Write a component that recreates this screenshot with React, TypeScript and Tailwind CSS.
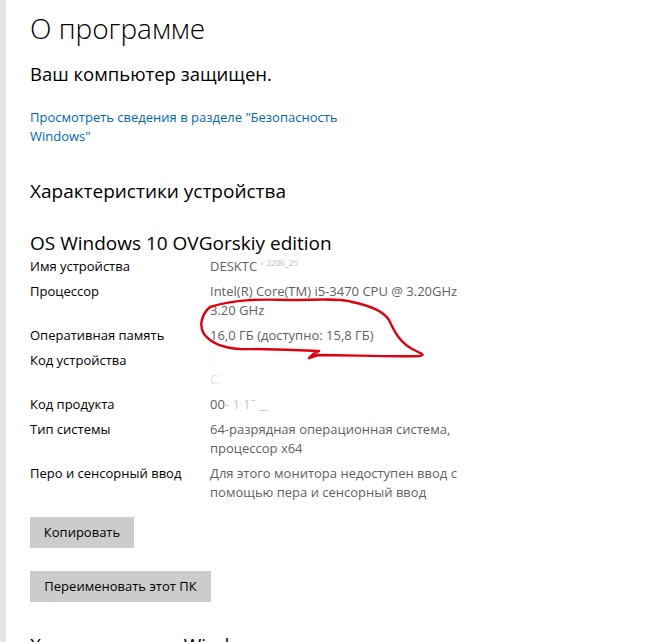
const specs = [
  { label: "Имя устройства", value: ["DESKTC"], faint: " '  ²²⁰⁶‑²⁵" },
  { label: "Процессор", value: ["Intel(R) Core(TM) i5-3470 CPU @ 3.20GHz", "3.20 GHz"] },
  { label: "Оперативная память", value: ["16,0 ГБ (доступно: 15,8 ГБ)"] },
  { label: "Код устройства", value: ["", ""], blur: true },
  { label: "Код продукта", value: ["00"], faint: "- 1 1ˉ  ˍˍ" },
  { label: "Тип системы", value: ["64-разрядная операционная система,", "процессор x64"] },
  { label: "Перо и сенсорный ввод", value: ["Для этого монитора недоступен ввод с", "помощью пера и сенсорный ввод"] },
];

function Scribble() {
  return (
    <svg
      className="pointer-events-none absolute left-0 top-0"
      width="672"
      height="642"
      viewBox="0 0 672 642"
    >
      <path
        d="M210 307 C 235 299, 262 299, 290 300 C 318 300, 340 298, 352 302 C 372 306, 384 312, 389 320 C 395 333, 400 342, 412 349 C 420 353, 426 355, 420 356 C 390 357, 350 355, 318 355 L 309 358 C 312 355, 316 352, 319 351 C 300 350, 270 349, 240 349 C 222 348, 210 342, 204 334 C 199 326, 201 315, 210 307 Z"
        fill="none"
        stroke="#e0000f"
        strokeWidth="2.4"
        strokeLinejoin="round"
        strokeLinecap="round"
      />
    </svg>
  );
}

export default function App() {
  return (
    <div
      className="relative flex h-[642px] w-[672px] overflow-hidden bg-white text-black"
      style={{ fontFamily: '"Open Sans", "Noto Sans", sans-serif' }}
    >
      <div className="w-[6px] shrink-0 bg-[#e6e6e6]" />
      <div className="pl-[24px]">
        <h1 className="mt-[10px] text-[28px] font-light leading-[36px]">О программе</h1>
        <div className="mt-[14px] text-[18.5px] leading-[28px]">Ваш компьютер защищен.</div>
        <div className="mt-[20px] w-[330px] text-[13px] leading-[19px] text-[#0067b8]">
          Просмотреть сведения в разделе "Безопасность
          <br />
          Windows"
        </div>
        <h2 className="mt-[31px] text-[19px] leading-[28px]">Характеристики устройства</h2>
        <div className="mt-[24px] text-[19px] leading-[28px]">OS Windows 10 OVGorskiy edition</div>

        <div className="flex flex-col gap-[6px] text-[13px] leading-[19px]">
          {specs.map((s) => (
            <div key={s.label} className="flex">
              <div className="w-[180px] shrink-0">{s.label}</div>
              <div className="text-[#5f5f5f]">
                {s.value.map((line, i) => (
                  <div key={i} className="h-[19px] whitespace-nowrap">
                    {s.blur ? (
                      <span className="text-[#e4e4e4]">{i === 0 ? "·" : "C."}</span>
                    ) : (
                      line
                    )}
                    {i === 0 && s.faint && <span className="text-[#c8c8c8]">{s.faint}</span>}
                  </div>
                ))}
              </div>
            </div>
          ))}
        </div>

        <div className="mt-[15px] flex h-[31px] w-[104px] items-center justify-center bg-[#cccccc] text-[13px]">
          Копировать
        </div>
        <div className="mt-[23px] flex h-[31px] w-[181px] items-center justify-center bg-[#cccccc] text-[13px]">
          Переименовать этот ПК
        </div>

        <h2 className="mt-[29px] whitespace-nowrap text-[19px] leading-[28px]">Характеристики Windows</h2>
      </div>
      <Scribble />
    </div>
  );
}
